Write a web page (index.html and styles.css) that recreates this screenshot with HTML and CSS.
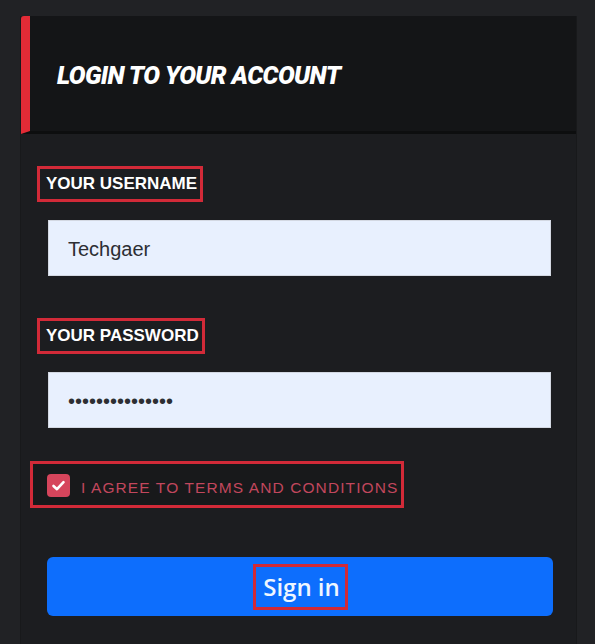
FILE: index.html
```html
<!DOCTYPE html>
<html lang="en">
<head>
<meta charset="utf-8">
<title>Login</title>
<link rel="stylesheet" href="styles.css">
</head>
<body>
<div class="panel">
  <div class="panel-header">
    <h2 class="title">LOGIN TO YOUR ACCOUNT</h2>
  </div>
  <form class="form">
    <label class="field-label mark">YOUR USERNAME</label>
    <input class="field" type="text" value="Techgaer">
    <label class="field-label mark label-pass">YOUR PASSWORD</label>
    <input class="field" type="password" value="abcdefghijklmno">
    <div class="agree mark">
      <span class="checkbox">
        <svg width="23" height="23" viewBox="0 0 23 23"><polyline points="6.5,12 10,15.2 16.5,8.2" fill="none" stroke="#fff" stroke-width="2.6" stroke-linecap="round" stroke-linejoin="round"/></svg>
      </span>
      <span class="agree-text">I AGREE TO TERMS AND CONDITIONS</span>
    </div>
    <button class="btn" type="button"><span class="btn-text mark">Sign in</span></button>
  </form>
</div>
</body>
</html>
```

FILE: styles.css
```css
html, body {
  margin: 0;
  padding: 0;
  background: #212225;
}
body {
  padding: 16px 18px 0 20px;
  min-height: 644px;
  box-sizing: border-box;
}
.panel {
  width: 557px;
  min-height: 628px;
  background: #1c1d20;
  border-left: 1px solid #18191b;
  border-right: 1px solid #18191b;
  box-sizing: border-box;
}
.panel-header {
  height: 118px;
  box-sizing: border-box;
  background: #141517;
  border-left: 9px solid #e32b36;
  border-bottom: 3px solid #0d0e0f;
  border-top-left-radius: 3px;
  display: flex;
  align-items: center;
  padding-left: 27px;
}
.title {
  margin: 0;
  font-family: Roboto, "Liberation Sans", sans-serif;
  font-weight: 900;
  font-style: italic;
  font-size: 25px;
  letter-spacing: -0.6px;
  color: #ffffff;
  padding-top: 3px;
}
.form {
  display: flex;
  flex-direction: column;
  align-items: flex-start;
  padding: 32px 0 0 27px;
}
.mark {
  border: 3px solid #d22a38;
}
.field-label {
  display: block;
  font-family: "Liberation Sans", Arial, sans-serif;
  font-weight: 700;
  font-size: 17px;
  color: #ffffff;
  line-height: 20px;
  padding: 5px 3px 5px 6px;
  margin-left: -11px;
}
.label-pass {
  margin-top: 42px;
  padding-right: 3px;
}
.field {
  margin-top: 18px;
  margin-left: 0;
  width: 503px;
  height: 56px;
  box-sizing: border-box;
  background: #e8f0fe;
  border: 1px solid #d3d8e2;
  border-radius: 0;
  padding: 3px 0 0 19px;
  font-family: "Liberation Sans", Arial, sans-serif;
  font-size: 20px;
  color: #2c2e33;
  outline: none;
}
input[type="password"] {
  font-size: 20px;
  letter-spacing: 0;
}
.agree {
  margin-top: 33px;
  margin-left: -18px;
  width: 374px;
  height: 47px;
  box-sizing: border-box;
  display: flex;
  align-items: center;
  padding-left: 14px;
  padding-top: 2px;
  background: #18191b;
}
.checkbox {
  width: 23px;
  height: 23px;
  background: #d6455c;
  border-radius: 4px;
  display: flex;
  flex-shrink: 0;
}
.agree-text {
  margin-left: 11px;
  font-family: "Liberation Sans", Arial, sans-serif;
  font-size: 15.5px;
  letter-spacing: 1.1px;
  color: #c2475d;
  white-space: nowrap;
  padding-top: 4px;
}
.btn {
  margin-top: 49px;
  margin-left: -1px;
  width: 506px;
  height: 59px;
  background: #0d6efd;
  border: none;
  border-radius: 6px;
  display: flex;
  align-items: center;
  justify-content: center;
  padding: 0 0 0 0;
  cursor: pointer;
}
.btn-text {
  font-family: "Open Sans", sans-serif;
  font-weight: 600;
  font-size: 24px;
  color: #eef6ff;
  line-height: 40px;
  padding: 0 5px 0 7px;
  margin-left: 1px;
}
```
